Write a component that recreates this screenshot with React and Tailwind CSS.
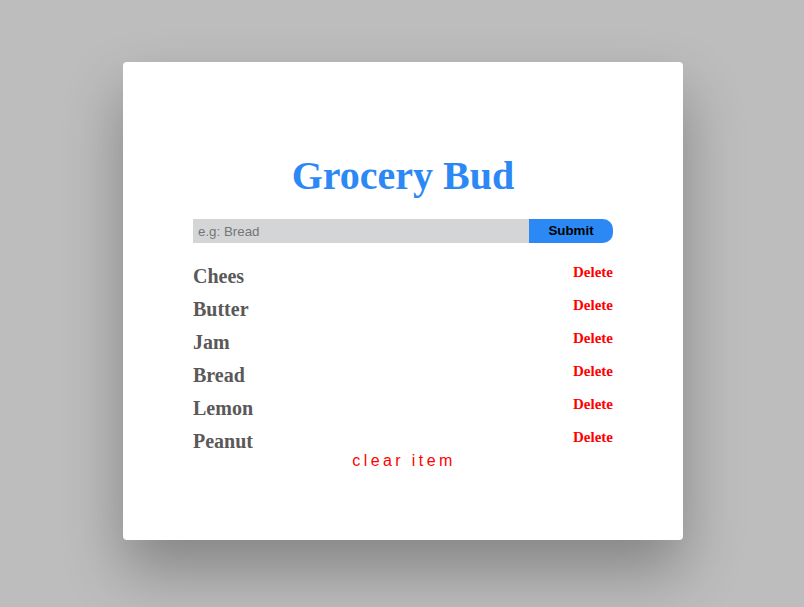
import React from "react";

const items = ["Chees", "Butter", "Jam", "Bread", "Lemon", "Peanut"];

export default function App() {
  return (
    <div className="min-h-screen w-full bg-[#bdbdbd] flex items-center justify-center">
      <div className="w-[560px] h-[478px] bg-white rounded-[4px] shadow-[0_30px_60px_rgba(0,0,0,0.3)] px-[70px] pt-[91px] mt-[-5px] ml-[2px]">
        <h1 className="text-center text-[40px] leading-[46px] font-bold text-[#2b88f5] font-['Liberation_Serif',serif]">
          Grocery Bud
        </h1>
        <form className="flex mt-[20px] h-[24px]" onSubmit={(e) => e.preventDefault()}>
          <input
            className="flex-1 h-[24px] bg-[#d4d5d7] pl-[5px] text-[13.333px] font-['Liberation_Sans',sans-serif] text-black placeholder:text-[#757575] outline-none border-0"
            placeholder="e.g: Bread"
          />
          <button
            type="submit"
            className="w-[84px] h-[24px] bg-[#2b88f5] rounded-r-[10px] text-[13.333px] font-bold text-black font-['Liberation_Sans',sans-serif]"
          >
            Submit
          </button>
        </form>
        <div className="mt-[21px] flex flex-col gap-[10px]">
          {items.map((it) => (
            <div key={it} className="flex items-start justify-between h-[23px]">
              <span className="pt-[1px] text-[20px] leading-[23px] font-bold text-[#5a5858] font-['Liberation_Serif',serif]">
                {it}
              </span>
              <button className="text-[15px] leading-[17px] font-bold text-[#ff0000] font-['Liberation_Serif',serif]">
                Delete
              </button>
            </div>
          ))}
        </div>
        <div className="flex justify-center">
          <button className="text-[16px] leading-[18px] tracking-[3.4px] text-[#ff0000] font-['Liberation_Sans',sans-serif] pl-[2px]">
            clear item
          </button>
        </div>
      </div>
    </div>
  );
}
